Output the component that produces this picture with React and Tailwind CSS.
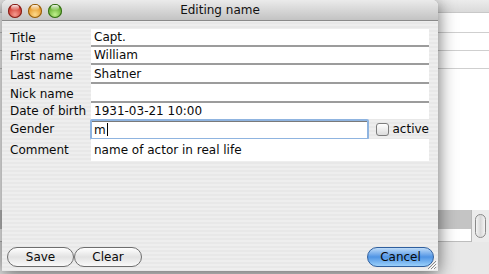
import React from "react";

const font = { fontFamily: '"DejaVu Sans", "Liberation Sans", sans-serif' };

function Light({ from, to, ring }) {
  return (
    <div
      className="w-[14px] h-[14px] rounded-full relative"
      style={{
        background: `radial-gradient(circle at 50% 75%, ${from} 0%, ${to} 80%)`,
        boxShadow: `inset 0 0 0 1px ${ring}`,
      }}
    >
      <div className="absolute left-[3px] top-[1px] w-[8px] h-[5px] rounded-full bg-gradient-to-b from-white/90 to-white/10" />
    </div>
  );
}

function Row({ label, value, h, line = true }) {
  return (
    <div className="flex" style={{ height: h }}>
      <div className="w-[81px] flex items-center">{label}</div>
      <div
        className={
          "flex-1 bg-white flex items-center pl-[3px] " +
          (line ? "border-b-2 border-[#9c9c9c]" : "")
        }
      >
        {value}
      </div>
    </div>
  );
}

export default function App() {
  return (
    <div
      className="relative w-[489px] h-[274px] overflow-hidden bg-white text-[12px] text-[#0a0a0a]"
      style={font}
    >
      {/* background window content */}
      <div className="flex flex-col w-full h-full">
        <div className="h-[13px] bg-gradient-to-b from-[#ececec] to-[#dadada] border-b border-[#c8c8c8]" />
        <div className="h-[20px] bg-white border-b border-[#cfcfcf]" />
        <div className="h-[18px] bg-white border-b border-[#cfcfcf]" />
        <div className="h-[18px] bg-white border-b border-[#cfcfcf]" />
        <div className="h-[141px] bg-white" />
        <div className="flex h-[32px]">
          <div className="flex-1 flex flex-col">
            <div className="h-[19px] bg-[#c4c4c4]" />
            <div className="flex-1 bg-white border-b border-[#bdbdbd]" />
          </div>
          <div className="w-[18px] bg-[#ececec] border-l border-[#b8b8b8] flex items-center justify-center">
            <div className="w-[11px] h-[24px] rounded-[6px] border border-[#8a8a8a] bg-gradient-to-r from-[#f4f4f4] via-[#d8d8d8] to-[#f4f4f4]" />
          </div>
        </div>
        <div className="flex-1 bg-[#e8e8e8]" />
      </div>

      {/* dialog window */}
      <div className="absolute left-[2px] top-0 w-[436px] h-[271px] rounded-t-[6px] flex flex-col shadow-[0_3px_18px_rgba(0,0,0,0.6)] bg-[repeating-linear-gradient(to_bottom,#eeeeee_0px,#eeeeee_2px,#e8e8e8_2px,#e8e8e8_4px)]">
        {/* title bar */}
        <div className="relative h-[21px] rounded-t-[6px] bg-gradient-to-b from-[#ebebeb] to-[#c3c3c3] border-b border-[#8a8a8a] flex items-center justify-center">
          <div className="absolute left-[6px] top-[4px] flex gap-[6px]">
            <Light from="#f59a8e" to="#c51f16" ring="#7e2019" />
            <Light from="#fcd98a" to="#e0860c" ring="#8f5c10" />
            <Light from="#bff08a" to="#4a9a18" ring="#356a18" />
          </div>
          <span className="text-[12px] text-[#111] mt-[-1px]">Editing name</span>
        </div>

        {/* form */}
        <div className="pl-[8px] pr-[9px] pt-[8px] flex flex-col">
          <Row label="Title" value="Capt." h={18} />
          <Row label="First name" value="William" h={18} />
          <Row label="Last name" value="Shatner" h={19} />
          <Row label="Nick name" value="" h={19} />
          <Row label="Date of birth" value="1931-03-21 10:00" h={16} line={false} />
          <div className="flex h-[20px]">
            <div className="w-[80px] flex items-center">Gender</div>
            <div className="w-[279px] h-[21px] bg-white border-2 border-[#8fb4e0] rounded-[2px] shadow-[inset_0_1px_0_#7a7a7a] flex items-center pl-[2px]">
              <span>m</span>
              <span className="w-[1px] h-[13px] bg-black ml-[1px]" />
            </div>
            <div className="flex-1 flex items-center pl-[7px] gap-[4px]">
              <div className="w-[13px] h-[13px] rounded-[3px] border border-[#7d7d7d] bg-gradient-to-b from-[#ffffff] to-[#dcdcdc]" />
              <span>active</span>
            </div>
          </div>
          <Row label="Comment" value="name of actor in real life" h={22} line={false} />
        </div>

        {/* buttons */}
        <div className="mt-auto flex items-center pl-[5px] pr-[4px] pb-[4px]">
          <div className="w-[67px] h-[20px] rounded-full border border-[#6e6e6e] bg-gradient-to-b from-[#ffffff] via-[#e2e2e2] to-[#fafafa] flex items-center justify-center">
            Save
          </div>
          <div className="w-[68px] h-[20px] rounded-full border border-[#6e6e6e] bg-gradient-to-b from-[#ffffff] via-[#e2e2e2] to-[#fafafa] flex items-center justify-center">
            Clear
          </div>
          <div className="ml-auto w-[67px] h-[20px] rounded-full border border-[#2f5f9e] bg-gradient-to-b from-[#bfdcf8] via-[#4f94e4] to-[#9ad0fa] flex items-center justify-center">
            Cancel
          </div>
        </div>

        {/* resize grip */}
        <svg className="absolute right-[1px] bottom-[1px]" width="11" height="11" viewBox="0 0 11 11">
          <path d="M10 2 L2 10 M10 5 L5 10 M10 8 L8 10" stroke="#8a8a8a" strokeWidth="1" />
          <path d="M11 3 L3 11 M11 6 L6 11" stroke="#ffffff" strokeWidth="1" />
        </svg>
      </div>
    </div>
  );
}
